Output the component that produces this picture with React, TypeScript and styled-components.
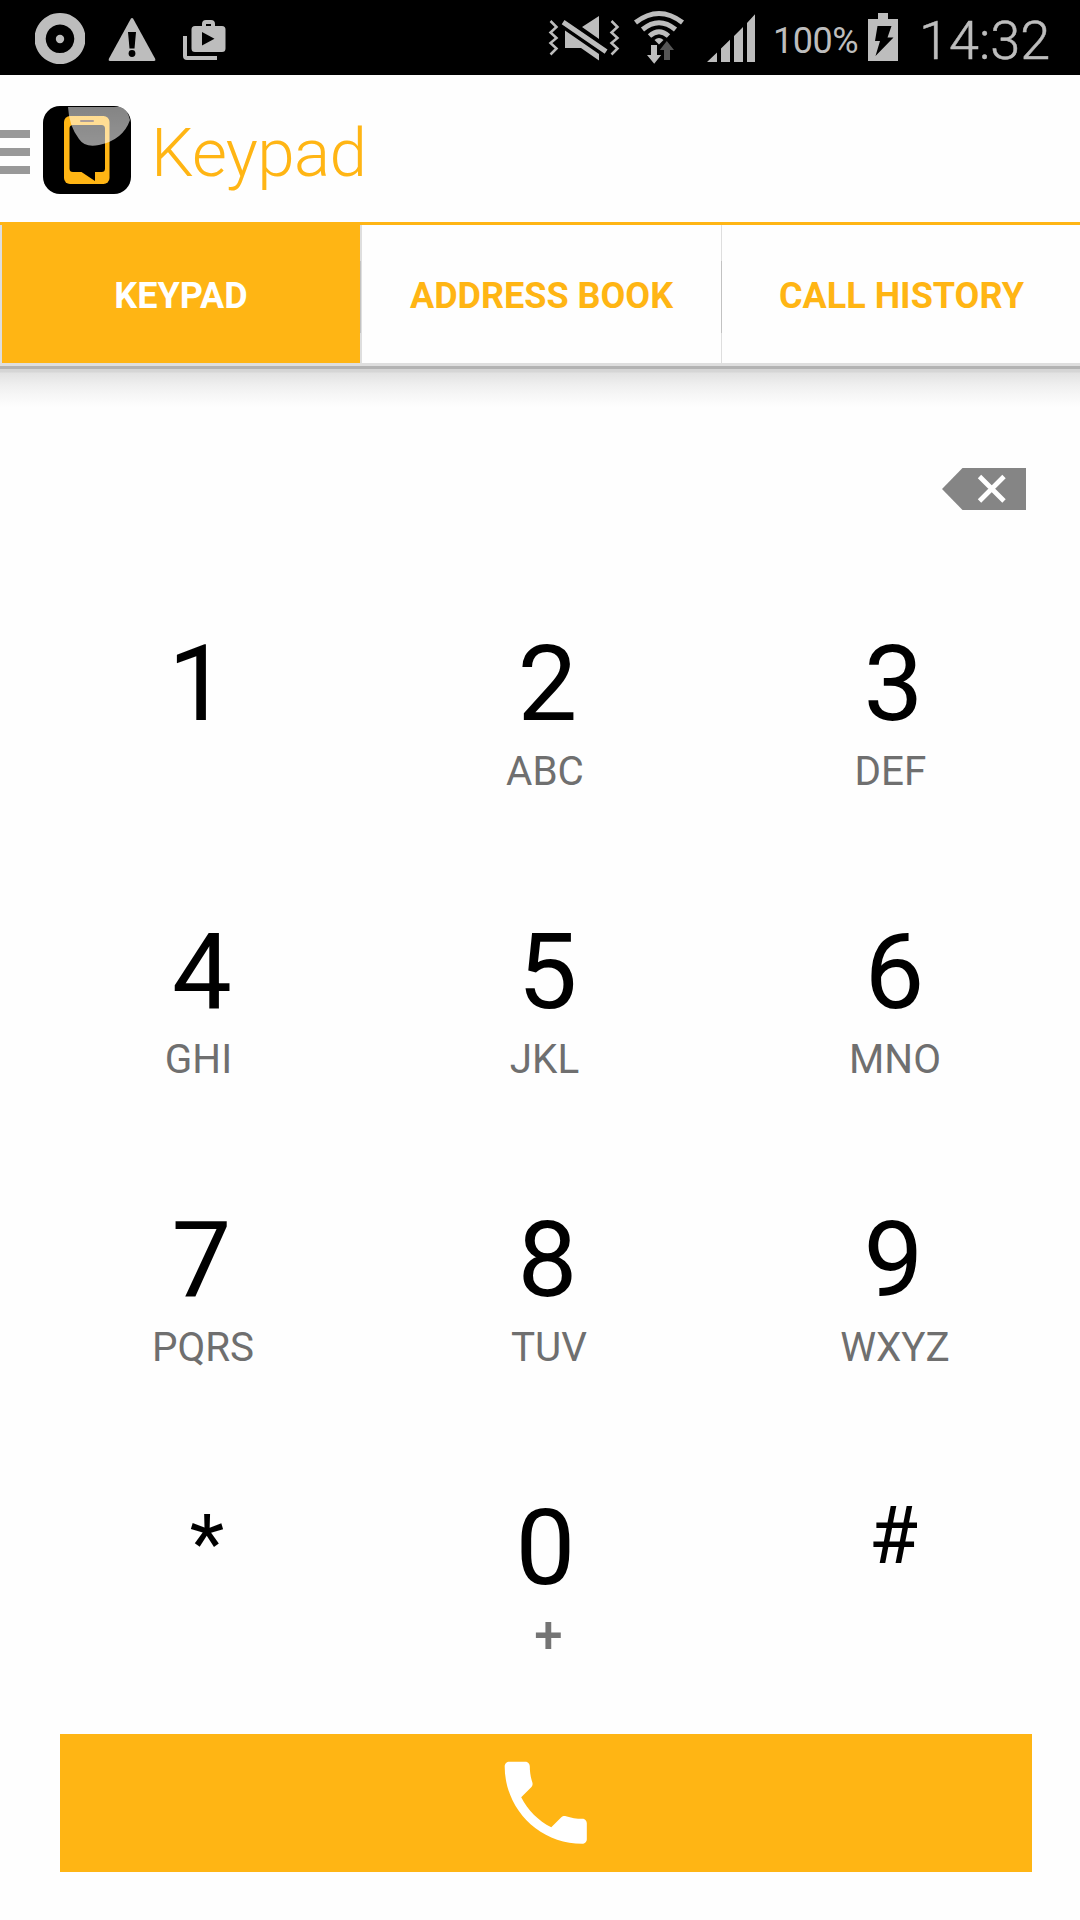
import React from "react";
import styled, { createGlobalStyle } from "styled-components";

const ACCENT = "#ffb514";
const STATUS = "#bdbdbd";

const GlobalStyle = createGlobalStyle`
  body { margin: 0; background: #fefefe; }
  *, *::before, *::after { box-sizing: border-box; }
  button { border: 0; padding: 0; background: none; font: inherit; }
`;

const Screen = styled.div`
  width: 1080px;
  height: 1920px;
  display: flex;
  flex-direction: column;
  overflow: hidden;
  background: #fefefe;
  font-family: Roboto, "Liberation Sans", sans-serif;
`;

const StatusBar = styled.header`
  height: 75px;
  flex: none;
  display: flex;
  justify-content: space-between;
  background: #000;
  color: ${STATUS};
  padding: 0 30px 0 35px;
`;

const StatusGroup = styled.div`
  display: flex;
`;

const StatusIcon = styled.svg<{ $gap?: number }>`
  display: block;
  flex: none;
  height: 75px;
  margin-left: ${(p) => p.$gap ?? 0}px;
  fill: ${STATUS};
`;

const BatteryLevel = styled.span`
  font-size: 36px;
  line-height: 42px;
  width: 87px;
  margin: 20px 0 0 17px;
  letter-spacing: -0.5px;
  white-space: nowrap;
`;

const Clock = styled.span`
  font-size: 54px;
  font-weight: 300;
  -webkit-text-stroke: 0.5px ${STATUS};
  line-height: 64px;
  width: 131px;
  margin: 9px 0 0 21px;
  white-space: nowrap;
`;

const ActionBar = styled.div`
  height: 150px;
  flex: none;
  display: flex;
  align-items: flex-start;
  border-bottom: 3px solid ${ACCENT};
`;

const Menu = styled.button`
  display: flex;
  flex-direction: column;
  gap: 10px;
  width: 30px;
  margin-top: 55px;
`;

const MenuBar = styled.span`
  height: 8px;
  background: #999;
`;

const Logo = styled.svg`
  display: block;
  margin: 31px 0 0 13px;
`;

const Title = styled.h1`
  margin: 38px 0 0 20px;
  font-size: 67.5px;
  line-height: 80px;
  letter-spacing: -0.7px;
  font-weight: 300;
  color: ${ACCENT};
`;

const Tabs = styled.nav`
  height: 141px;
  flex: none;
  display: grid;
  grid-template-columns: 360px 361px 359px;
  border-bottom: 3px solid #dedede;
`;

const Tab = styled.button<{ $active?: boolean; $edge?: number }>`
  display: flex;
  align-items: center;
  justify-content: center;
  padding: 4px 0 0 2px;
  background:
    ${(p) => (p.$active ? "" : "linear-gradient(#c2c2c2, #c2c2c2) 0 36px / 1px 72px no-repeat,")}
    linear-gradient(#dedede, #dedede) 0 0 / ${(p) => p.$edge ?? 1}px 100% no-repeat,
    ${(p) => (p.$active ? ACCENT : "#fefefe")};
  color: ${(p) => (p.$active ? "#fff" : ACCENT)};
  font-size: 36px;
  font-weight: 700;
  white-space: nowrap;
`;

const TabShadow = styled.div`
  height: 42px;
  flex: none;
  border-top: 3px solid #b3b3b3;
  background: linear-gradient(#d5d5d5 0, #d5d5d5 3px, #e2e2e2 4px, #efefef 16px, #f6f6f6 25px, #fefefe 38px);
`;

const NumberField = styled.div`
  height: 130px;
  flex: none;
  display: flex;
  justify-content: flex-end;
  padding: 60px 54px 0 0;
`;

const Pad = styled.main`
  flex: 1;
  min-height: 0;
  display: grid;
  grid-template-columns: repeat(3, 346px);
  grid-template-rows: repeat(3, 288px) 1fr;
  justify-content: center;
  padding: 84px 0 0 10px;
`;

const Key = styled.button`
  display: flex;
  flex-direction: column;
  align-items: center;
  justify-content: flex-start;
`;

const Digit = styled.span<{ $shift?: number; $size?: number; $lift?: number }>`
  font-size: ${(p) => p.$size ?? 106.5}px;
  line-height: ${(p) => 126 - (p.$lift ?? 1) * 2}px;
  height: 126px;
  flex: none;
  margin-left: ${(p) => (p.$shift ?? 0) * 2}px;
  color: #000;
`;

const Letters = styled.span<{ $shift?: number; $plus?: boolean }>`
  font-size: ${(p) => (p.$plus ? 51 : 40.4)}px;
  font-weight: ${(p) => (p.$plus ? 500 : 400)};
  line-height: 48px;
  margin-left: ${(p) => (p.$shift ?? 0) * 2}px;
  color: ${(p) => (p.$plus ? "#747474" : "#6f6f6f")};
`;

const CallButton = styled.button`
  width: 972px;
  height: 138px;
  flex: none;
  margin: 0 0 48px 60px;
  display: flex;
  align-items: center;
  justify-content: center;
  background: ${ACCENT};
`;

type KeyData = {
  digit: string;
  letters?: string;
  digitShift?: number;
  lettersShift?: number;
  size?: number;
  lift?: number;
};

const keys: KeyData[] = [
  { digit: "1", digitShift: -1 },
  { digit: "2", letters: "ABC", digitShift: 2.5 },
  { digit: "3", letters: "DEF", digitShift: 2.5, lettersShift: -0.5 },
  { digit: "4", letters: "GHI", digitShift: 3, lettersShift: -0.5 },
  { digit: "5", letters: "JKL", digitShift: 2.5, lettersShift: -0.5 },
  { digit: "6", letters: "MNO", digitShift: 3.5, lettersShift: 4 },
  { digit: "7", letters: "PQRS", digitShift: 2.5, lettersShift: 4 },
  { digit: "8", letters: "TUV", digitShift: 2.5, lettersShift: 4 },
  { digit: "9", letters: "WXYZ", digitShift: 2.5, lettersShift: 4 },
  { digit: "*", digitShift: 8, size: 80, lift: 5 },
  { digit: "0", letters: "+", digitShift: 0.5, lettersShift: 3.5 },
  { digit: "#", digitShift: 2.5, size: 80, lift: 13 },
];

const NotificationIcons = () => (
  <StatusGroup>
    <StatusIcon width="50" viewBox="35 0 50 75">
      <path fillRule="evenodd" d="M60 13a25.500 25.500 0 1 0 .01 0zM60 24.500a14.300 14.300 0 1 1-.01 0z" />
      <circle cx="60" cy="39" r="4.200" />
    </StatusIcon>
    <StatusIcon width="48" viewBox="108 0 48 75" $gap={23}>
      <path d="M130.800 18.800Q132 17 133.200 18.800L155 58.500Q156 61 154 61H110Q108 61 109 58.500Z" />
      <path fill="#000" d="M128 32h8l-1.500 16.500h-5z" />
      <circle cx="132" cy="53.500" r="3.400" fill="#000" />
    </StatusIcon>
    <StatusIcon width="43" viewBox="183 0 43 75" $gap={27}>
      <path d="M183 36h4v20h30v4h-30q-4 0-4-4z" />
      <path
        fillRule="evenodd"
        d="M195 26h7v-2q0-4 4-4h5q4 0 4 4v2h7q3.500 0 3.500 3.500v19q0 3.500-3.500 3.500h-27q-3.500 0-3.500-3.500v-19q0-3.500 3.500-3.500zM206 24v2h5v-2zM202 32v13.500l12.500-6.700z"
      />
    </StatusIcon>
  </StatusGroup>
);

const SystemIcons = () => (
  <StatusGroup>
    <StatusIcon width="72" viewBox="548 0 72 75">
      <g fill="none" stroke={STATUS} strokeWidth="2.500">
        <path d="M550.500 21l6 6-6 5.500 6 5.500-6 5 6 5.500-6 6" />
        <path d="M611.500 21l6 6-6 5.500 6 5.500-6 5 6 5.500-6 6" />
      </g>
      <path d="M564.500 20l43 29.500-2.800 4.200-43-29.500zM582 27l17-11v23zM565 30.500l34 23.500v6.500l-18-12.500h-16z" />
    </StatusIcon>
    <StatusIcon width="52" viewBox="633 0 52 75" $gap={13}>
      <g fill="none" stroke={STATUS} strokeWidth="5">
        <path d="M635.500 22.500Q659 4.500 682.500 22.500" />
        <path d="M642.500 29.500Q659 16 675.500 29.500" />
        <path d="M649.500 36Q659 27.500 668.500 36" />
      </g>
      <path d="M654.500 40q4.500-4 9 0l-4.500 4.500z" />
      <path d="M651 45h6v10h4.200L654.200 63.700 647 55h4z" />
      <path fill="#555" d="M664 60v-10h-4.200l7-9 7.200 9h-4v10z" />
    </StatusIcon>
    <StatusIcon width="49" viewBox="707 0 49 75" $gap={22}>
      <path d="M707 62l10-9.500V62zM721 62V48.500l9-8.800V62zM734 62V36l9-9v35zM747 62V23l8-8.700V62z" />
    </StatusIcon>
    <BatteryLevel>100%</BatteryLevel>
    <StatusIcon width="30" viewBox="868 0 30 75" $gap={8}>
      <path d="M878 13h10v6h10v42h-30V19h10z" />
      <path fill="#000" d="M877.500 26h14l-4 11.500h6L875.500 56l4.500-15h-5z" />
    </StatusIcon>
    <Clock>14:32</Clock>
  </StatusGroup>
);

const AppLogo = () => (
  <Logo width="88" height="88" viewBox="0 0 88 88">
    <defs>
      <clipPath id="logo-tile">
        <rect width="88" height="88" rx="17" />
      </clipPath>
      <linearGradient id="logo-gloss" x1="0" y1="0" x2="0" y2="1">
        <stop offset="0" stopColor="#fff" stopOpacity="0.52" />
        <stop offset="1" stopColor="#fff" stopOpacity="0.58" />
      </linearGradient>
    </defs>
    <g clipPath="url(#logo-tile)">
      <rect width="88" height="88" />
      <rect x="21" y="10" width="45.500" height="68" rx="6" fill={ACCENT} />
      <path d="M30 19h28.500q3.500 0 3.500 3.500v40q0 3.500-3.500 3.500H52v9L38.500 66H30q-3.500 0-3.500-3.500v-40Q26.500 19 30 19z" />
      <rect x="37" y="14" width="14" height="2" rx="1" fill="#4a2a20" />
      <path d="M25 1H78Q85 4 87 14Q80 34 56 39Q42 42 36 33Q26 20 25 1z" fill="url(#logo-gloss)" />
    </g>
  </Logo>
);

const Backspace = () => (
  <svg width="84" height="42" viewBox="0 0 84 42">
    <path d="M0 21L20.500 0H84V42H20.500z" fill="#858585" />
    <path d="M37.500 8.500L62 33M62 8.500L37.500 33" stroke="#fff" strokeWidth="4.800" />
  </svg>
);

const Phone = () => (
  <svg width="109.500" height="109.500" viewBox="0 0 24 24" fill="#fff">
    <path d="M6.620 10.790c1.440 2.830 3.760 5.140 6.590 6.590l2.200-2.200c.27-.27.670-.36 1.020-.24 1.120.37 2.330.570 3.570.570.550 0 1 .45 1 1V20c0 .55-.45 1-1 1-9.390 0-17-7.610-17-17 0-.55.45-1 1-1h3.500c.55 0 1 .45 1 1 0 1.250.2 2.450.57 3.570.11.35.030.740-.25 1.020l-2.200 2.200z" />
  </svg>
);

export default function App() {
  return (
    <>
      <GlobalStyle />
      <Screen>
        <StatusBar>
          <NotificationIcons />
          <SystemIcons />
        </StatusBar>
        <ActionBar>
          <Menu aria-label="Menu">
            <MenuBar />
            <MenuBar />
            <MenuBar />
          </Menu>
          <AppLogo />
          <Title>Keypad</Title>
        </ActionBar>
        <Tabs>
          <Tab $active $edge={2}>KEYPAD</Tab>
          <Tab $edge={2}>ADDRESS BOOK</Tab>
          <Tab>CALL HISTORY</Tab>
        </Tabs>
        <TabShadow />
        <NumberField>
          <Backspace />
        </NumberField>
        <Pad>
          {keys.map((k) => (
            <Key key={k.digit}>
              <Digit $shift={k.digitShift} $size={k.size} $lift={k.lift}>{k.digit}</Digit>
              {k.letters && (
                <Letters $shift={k.lettersShift} $plus={k.letters === "+"}>{k.letters}</Letters>
              )}
            </Key>
          ))}
        </Pad>
        <CallButton aria-label="Call">
          <Phone />
        </CallButton>
      </Screen>
    </>
  );
}
